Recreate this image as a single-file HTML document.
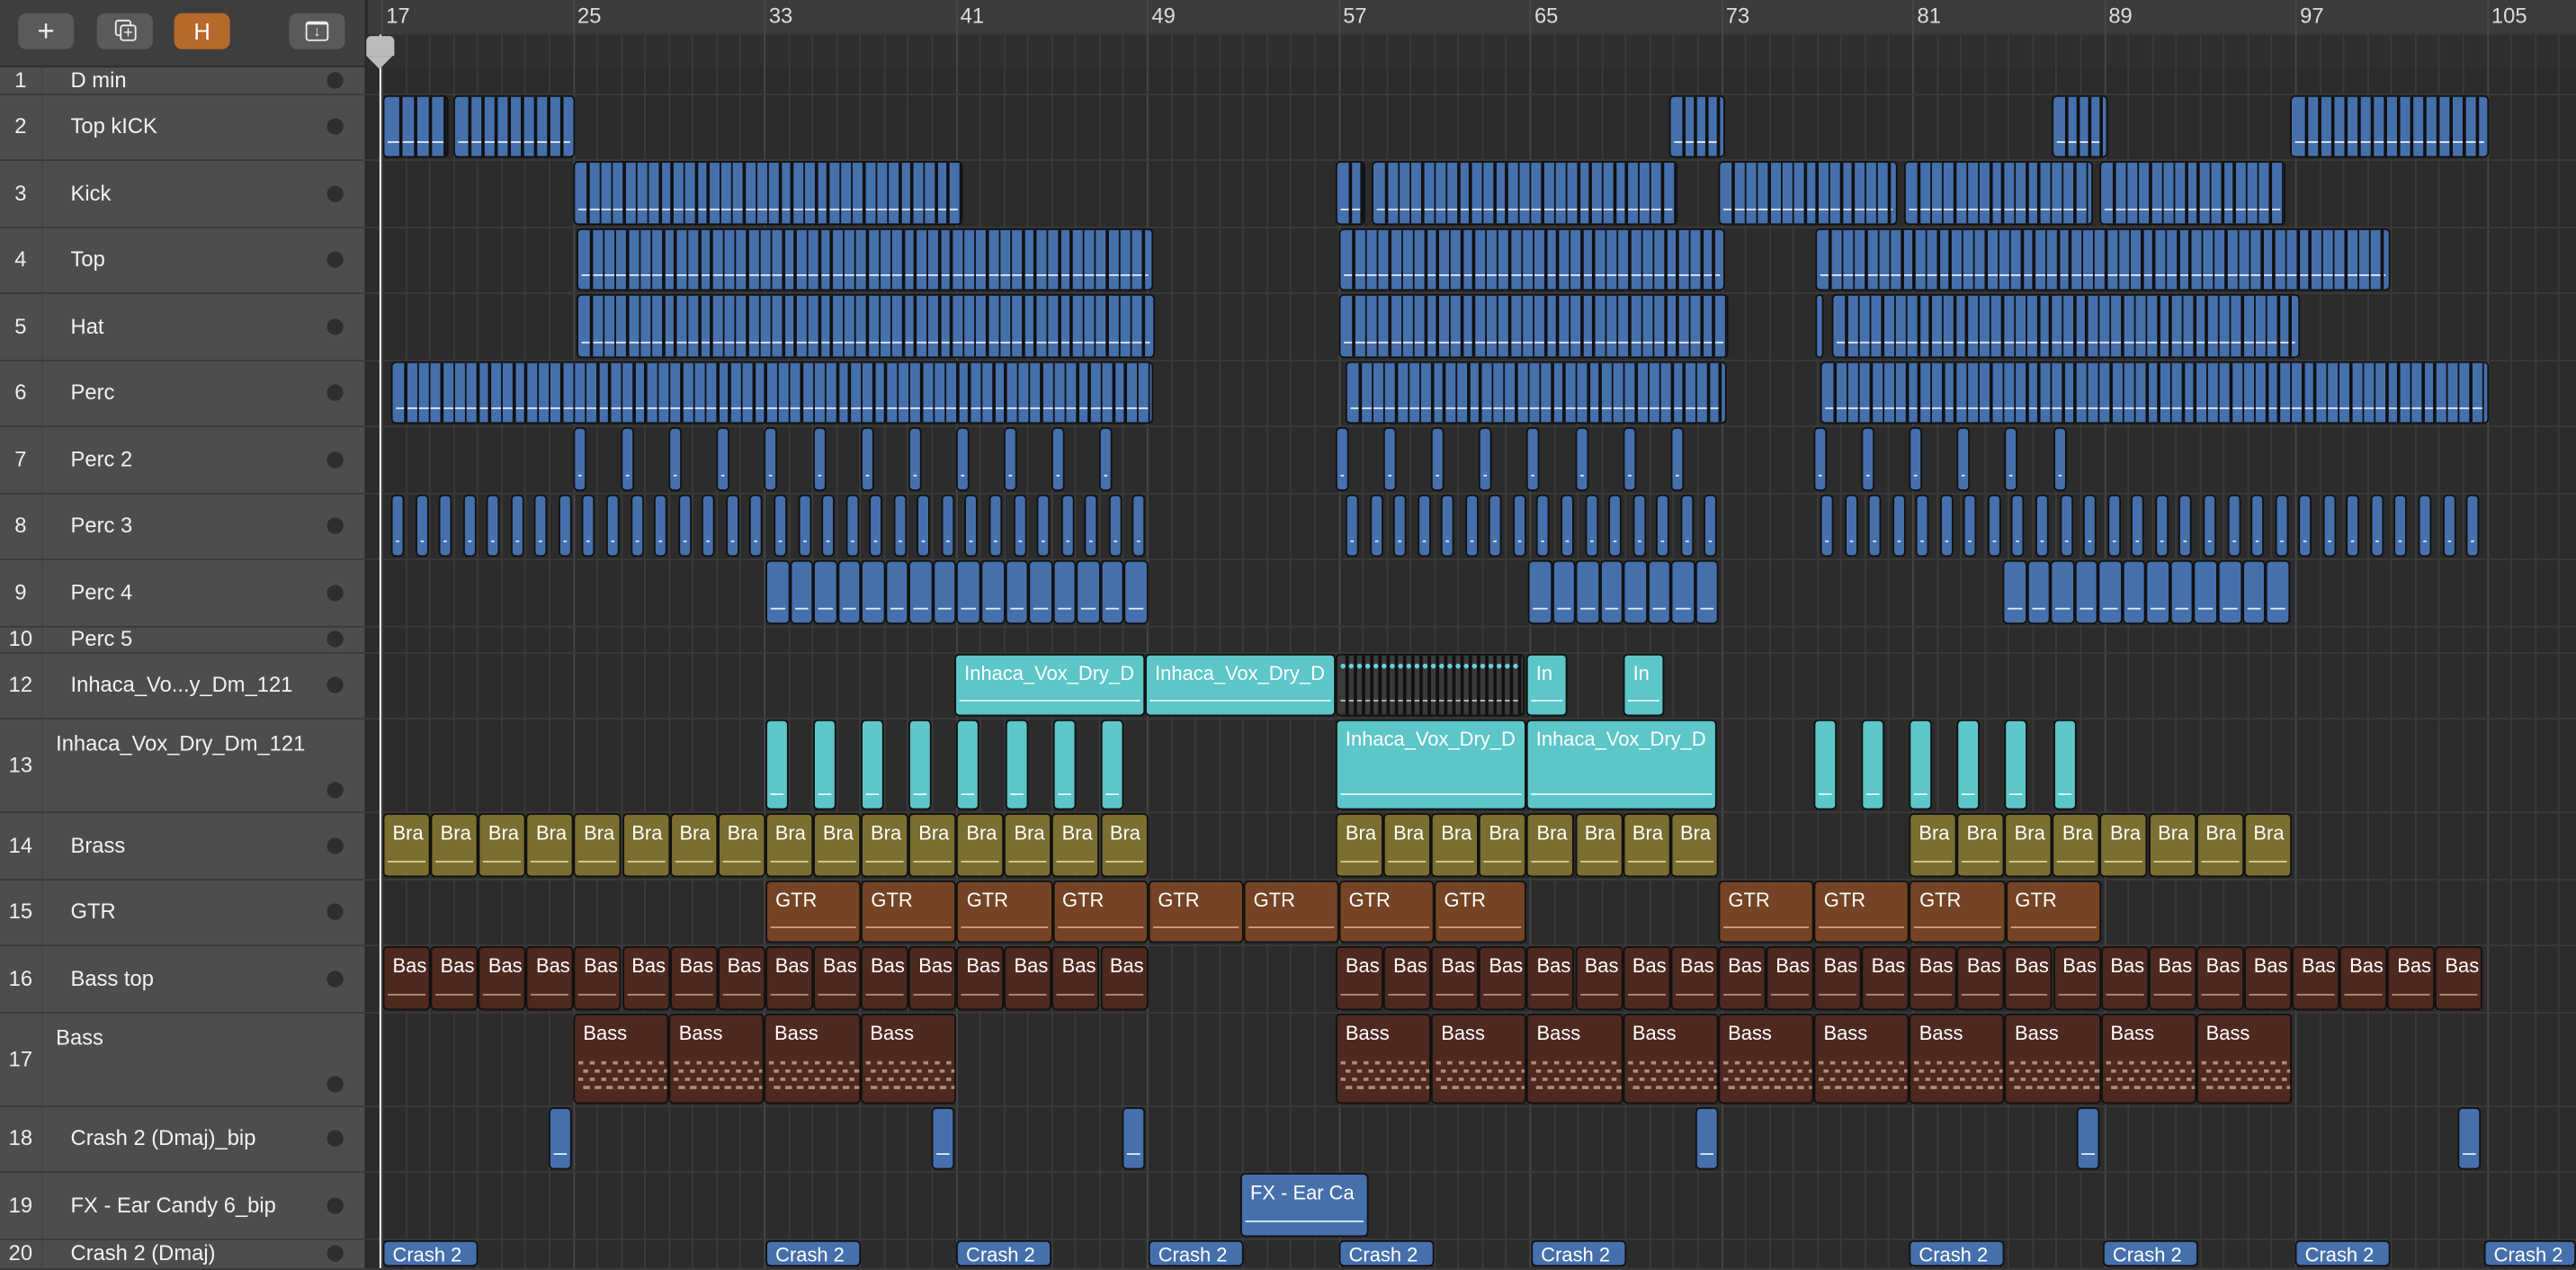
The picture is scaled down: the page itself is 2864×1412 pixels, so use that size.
<!DOCTYPE html>
<html><head><meta charset="utf-8"><style>
html,body{margin:0;padding:0;background:#2b2b2b;overflow:hidden;width:2864px;height:1410px}
#w{position:absolute;left:0;top:0;width:1568px;height:772px;transform:scale(1.82653,1.82642);transform-origin:0 0;font-family:"Liberation Sans",sans-serif;background:#2c2c2c}
.a{position:absolute;box-sizing:border-box}
</style></head><body><div id="w">
<div class="a" style="left:0;top:0;width:224px;height:772px;background:#4d4d4d"></div>
<div class="a" style="left:0;top:0;width:224px;height:41px;background:#3e3e3e;border-bottom:1px solid #2e2e2e"></div>
<div class="a" style="left:224px;top:0;width:1344px;height:21px;background:#3b3b3b"></div>
<div class="a" style="left:224px;top:21px;width:1344px;height:20px;background:#2f2f2f"></div>
<div class="a" style="left:222px;top:0;width:2px;height:772px;background:#2a2a2a"></div>
<div class="a" style="left:25px;top:41px;width:1px;height:731px;background:#444"></div>
<div class="a" style="left:11px;top:8px;width:34px;height:22px;border-radius:5px;background:#5a5a5a;color:#eee;font-size:18px;text-align:center;line-height:22px">+</div>
<div class="a" style="left:59px;top:8px;width:34px;height:22px;border-radius:5px;background:#5a5a5a"><div class="a" style="left:11px;top:4px;width:10px;height:10px;border:1px solid #eee;border-radius:2px"></div><div class="a" style="left:14px;top:7px;width:10px;height:10px;border:1px solid #eee;border-radius:2px;background:#5a5a5a;color:#eee;font-size:10px;line-height:9px;text-align:center">+</div></div>
<div class="a" style="left:106px;top:8px;width:34px;height:22px;border-radius:5px;background:#b5692b;color:#fff;font-size:14px;text-align:center;line-height:22px">H</div>
<div class="a" style="left:176px;top:8px;width:34px;height:22px;border-radius:5px;background:#5a5a5a"><div class="a" style="left:10px;top:5px;width:14px;height:12px;border:1px solid #eee;border-radius:2px;border-top-width:2px;color:#eee;font-size:9px;line-height:9px;text-align:center">↓</div></div>
</div>
<script>
var W=document.getElementById('w');
function el(s,h){var d=document.createElement('div');d.className='a';d.style.cssText=s;if(h)d.innerHTML=h;W.appendChild(d);return d;}
function sub(p,s){var d=document.createElement('div');d.className='a';d.style.cssText=s;p.appendChild(d);return d;}
var B=function(b){return 232+(b-17)*14.5625;};
for(var b=17;b<=108;b++){var x=B(b);el('left:'+x+'px;top:'+(b%8==1?0:21)+'px;width:1px;height:'+(b%8==1?772:751)+'px;background:'+(b%8==1?'#484848':'#3b3b3b'));
 if((b-17)%8==0)el('left:'+(x+3)+'px;top:2px;color:#ddd;font-size:13px',''+b);}
var rows=[[1,'D min',41,16],[2,'Top kICK',57,40],[3,'Kick',97,41],[4,'Top',138,40],[5,'Hat',178,41],[6,'Perc',219,40],[7,'Perc 2',259,41],[8,'Perc 3',300,40],[9,'Perc 4',340,41],[10,'Perc 5',381,16],[12,'Inhaca_Vo...y_Dm_121',397,40],[13,'Inhaca_Vox_Dry_Dm_121',437,57],[14,'Brass',494,41],[15,'GTR',535,40],[16,'Bass top',575,41],[17,'Bass',616,57],[18,'Crash 2 (Dmaj)_bip',673,40],[19,'FX - Ear Candy 6_bip',713,41],[20,'Crash 2 (Dmaj)',754,18]];
var RT={};
rows.forEach(function(r){RT[r[0]]=[r[2],r[3]];
 el('left:0;top:'+(r[2]+r[3])+'px;width:1568px;height:1px;background:#3a3a3a');
 var big=r[3]>50, ty=big?r[2]+8:r[2]+r[3]/2-8;
 var lx=(r[0]==13||r[0]==17)?34:43;
 el('left:0;top:'+(r[2]+r[3]/2-8)+'px;width:25px;text-align:center;color:#eee;font-size:13px',''+r[0]);
 el('left:'+lx+'px;top:'+ty+'px;color:#f2f2f2;font-size:13px',r[1]);
 var dy=big?r[2]+r[3]-18:r[2]+r[3]/2-5;
 el('left:199px;top:'+dy+'px;width:10px;height:10px;border-radius:5px;background:#2e2e2e');
});
var C={b:['#4570ac','#dfeaff'],c:['#5cc6c8','#e0ffff'],o:['#7a6e30','#d8cc99'],g:['#744424','#d0a080'],t:['#4e2920','#b58a7a'],d:['#3a3a3a','#bbb']};
function reg(tr,x1,x2,col,label,seg,midi){var t=RT[tr];var c=C[col];
 var d=el('left:'+x1+'px;top:'+(t[0]+1)+'px;width:'+(x2-x1)+'px;height:'+(t[1]-2)+'px;background:'+c[0]+';border:1px solid #111;border-radius:3px;overflow:hidden');
 if(label){var s=sub(d,'left:5px;top:'+(t[1]<25?1:4)+'px;color:#fff;font-size:12px;white-space:nowrap');s.textContent=label;}
 if(midi){for(var j=0;j<4;j++)for(var k=0;k<8;k++)sub(d,'left:'+(2+k*7+(j%2)*3)+'px;top:'+(28+j*5)+'px;width:'+(j==3?4:3)+'px;height:2px;background:'+c[1]);}
 else if(t[1]>25){sub(d,'left:2px;right:2px;top:'+(t[1]-13)+'px;height:1px;background:'+c[1]);}
 if(seg){for(var x=seg;x<x2-x1-2;x+=seg){sub(d,'left:'+x+'px;top:0;width:1.5px;height:100%;background:#111');if(col=='d')sub(d,'left:'+(x-3)+'px;top:5px;width:3px;height:3px;border-radius:2px;background:#5cd6d8');}}
}
function rep(tr,x,n,w,col,label,step,midi){for(var i=0;i<n;i++)reg(tr,x+i*(step||w),x+i*(step||w)+w,col,label,0,midi);}
reg(2,233,273,'b','',9);reg(2,276,350,'b','',8);reg(2,1016,1050,'b','',7);reg(2,1249,1283,'b','',7);reg(2,1394,1515,'b','',8);
reg(3,349,586,'b','',7.3);reg(3,813,831,'b','',7);reg(3,835,1021,'b','',7.3);reg(3,1046,1155,'b','',7.3);reg(3,1159,1274,'b','',7.3);reg(3,1278,1391,'b','',7.3);
reg(4,351,702,'b','',7.3);reg(4,815,1050,'b','',7.3);reg(4,1105,1455,'b','',7.3);
reg(5,351,703,'b','',7.3);reg(5,815,1052,'b','',7.3);reg(5,1105,1110,'b','');reg(5,1115,1400,'b','',7.3);
reg(6,238,702,'b','',7.3);reg(6,819,1051,'b','',7.3);reg(6,1108,1515,'b','',7.3);
rep(7,349,12,8,'b','',29.1);rep(7,813,8,8,'b','',29.1);rep(7,1104,6,8,'b','',29.1);
rep(8,238,32,8,'b','',14.56);rep(8,819,16,8,'b','',14.56);rep(8,1108,28,8,'b','',14.56);
rep(9,466,16,14.56,'b','');rep(9,930,8,14.56,'b','');rep(9,1219,12,14.56,'b','');
reg(12,581,697,'c','Inhaca_Vox_Dry_D');reg(12,697,813,'c','Inhaca_Vox_Dry_D');reg(12,813,928,'d','',5);reg(12,929,954,'c','In');reg(12,988,1013,'c','In');
rep(13,466,8,14,'c','',29.1);reg(13,813,929,'c','Inhaca_Vox_Dry_D');reg(13,929,1045,'c','Inhaca_Vox_Dry_D');rep(13,1104,6,14,'c','',29.1);
rep(14,233,16,29.1,'o','Bra');rep(14,813,8,29.1,'o','Bra');rep(14,1162,8,29.1,'o','Bra');
rep(15,466,6,58.2,'g','GTR');reg(15,815,873,'g','GTR');reg(15,873,929,'g','GTR');rep(15,1046,4,58.2,'g','GTR');
rep(16,233,16,29.1,'t','Bas');rep(16,813,24,29.1,'t','Bas');
rep(17,349,4,58.2,'t','Bass',0,1);rep(17,813,10,58.2,'t','Bass',0,1);
[334,567,683,1032,1264,1496].forEach(function(x){reg(18,x,x+14,'b','');});
reg(19,755,833,'b','FX - Ear Ca');
[233,466,582,699,815,932,1162,1280,1397,1512].forEach(function(x){reg(20,x,Math.min(x+58,1568),'b','Crash 2');});
el('left:231px;top:21px;width:1px;height:751px;background:#fff');
el('left:223px;top:22px;width:17px;height:12px;background:#bbb;border-radius:3px 3px 0 0');
el('left:223px;top:34px;width:0;height:0;border-left:8.5px solid transparent;border-right:8.5px solid transparent;border-top:8px solid #bbb');
</script>
</body></html>
